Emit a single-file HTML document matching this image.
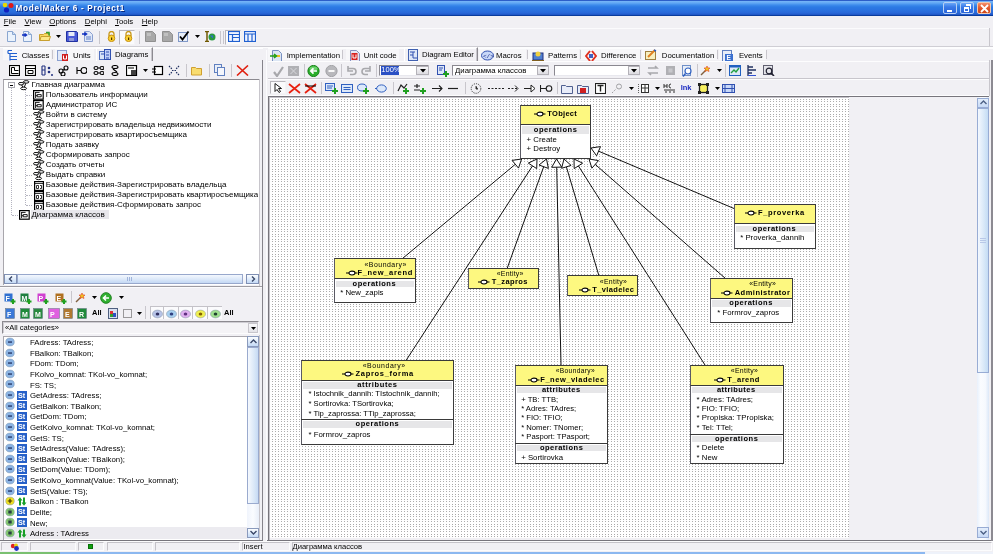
<!DOCTYPE html><html><head><meta charset="utf-8"><style>
html,body{margin:0;padding:0;}
body{will-change:transform;width:993px;height:554px;overflow:hidden;position:relative;background:#f1f0f4;font-family:"Liberation Sans", sans-serif;}
div,span,svg{position:absolute;box-sizing:border-box;}
.t{white-space:nowrap;line-height:10px;}
</style></head><body>
<div style="left:0px;top:0px;width:993px;height:16px;background:linear-gradient(to bottom,#2c5ec8 0px,#2c5ec8 1px,#78b6f8 1px,#62a8f4 3px,#3e8cec 5px,#2c7ae4 7px,#2a72e0 10px,#2868d8 13px,#2058c8 14.5px,#0a3c9c 15px,#0a3c9c 16px);"></div>
<svg style="left:2px;top:2px" width="12" height="11" viewBox="0 0 12 11"><circle cx="3" cy="3" r="2.3" fill="#e8d800"/><circle cx="9" cy="3.5" r="2.5" fill="#e01818"/><circle cx="4.5" cy="8" r="2.6" fill="#1020c0"/></svg>
<span class="t" style="left:15.5px;top:3.6px;line-height:10px;font-size:8.2px;font-weight:bold;color:#fff;letter-spacing:0.69px;text-shadow:1px 1px 0 #0a2a80;">ModelMaker 6 - Project1</span>
<div style="left:943px;top:2px;width:14px;height:12px;border:1px solid #b8d0f4;border-radius:2px;background:linear-gradient(#6aa8f8,#3a7ae8 40%,#2a64d8)"><div style="left:3px;top:7px;width:5px;height:2px;background:#fff"></div></div>
<div style="left:960px;top:2px;width:14px;height:12px;border:1px solid #b8d0f4;border-radius:2px;background:linear-gradient(#6aa8f8,#3a7ae8 40%,#2a64d8)"><div style="left:3px;top:4px;width:5px;height:5px;border:1px solid #fff;border-top-width:2px"></div><div style="left:5px;top:1px;width:5px;height:5px;border-top:2px solid #fff;border-right:1px solid #fff"></div></div>
<div style="left:977px;top:2px;width:14px;height:12px;border:1px solid #f0c8b0;border-radius:2px;background:linear-gradient(#f4906a,#e0582c 50%,#d04818)"><svg style="left:2px;top:1px" width="9" height="9"><path d="M1 1L8 8M8 1L1 8" stroke="#fff" stroke-width="1.8"/></svg></div>
<span class="t" style="left:3.8px;top:16.5px;line-height:10px;font-size:7.8px;font-weight:normal;color:#000;"><u>F</u>ile</span>
<span class="t" style="left:24.5px;top:16.5px;line-height:10px;font-size:7.8px;font-weight:normal;color:#000;"><u>V</u>iew</span>
<span class="t" style="left:49.3px;top:16.5px;line-height:10px;font-size:7.8px;font-weight:normal;color:#000;"><u>O</u>ptions</span>
<span class="t" style="left:84.8px;top:16.5px;line-height:10px;font-size:7.8px;font-weight:normal;color:#000;"><u>D</u>elphi</span>
<span class="t" style="left:115px;top:16.5px;line-height:10px;font-size:7.8px;font-weight:normal;color:#000;"><u>T</u>ools</span>
<span class="t" style="left:141.8px;top:16.5px;line-height:10px;font-size:7.8px;font-weight:normal;color:#000;"><u>H</u>elp</span>
<div style="left:0px;top:28px;width:989px;height:1px;background:#fbfbfd;"></div>
<div style="left:989px;top:28px;width:1px;height:18px;background:#c8c6cc;"></div>
<div style="left:0px;top:46px;width:993px;height:1px;background:#cfced4;"></div>
<div style="left:0px;top:47px;width:993px;height:1px;background:#fdfdfe;"></div>
<svg style="left:6px;top:31px" width="11" height="11" viewBox="0 0 11 11"><path d="M1.5 0.5h5l3 3v7h-8z" fill="#eaf2fc" stroke="#8aa6d0"/><path d="M6.5 0.5v3h3" fill="#c8dcf4" stroke="#8aa6d0"/></svg>
<svg style="left:21.5px;top:31px" width="11" height="11" viewBox="0 0 11 11"><path d="M1.5 0.5h5l3 3v7h-8z" fill="#eaf2fc" stroke="#8aa6d0"/><path d="M6.5 0.5v3h3" fill="#c8dcf4" stroke="#8aa6d0"/><path d="M0 4h4M2.5 2.5l2 1.5-2 1.5" stroke="#1030c0" stroke-width="1.5" fill="none"/></svg>
<svg style="left:38.5px;top:31px" width="12" height="11" viewBox="0 0 12 11"><path d="M0.5 3.5h4l1-1h5v7h-10z" fill="#f8d860" stroke="#c8a030"/><path d="M2 5.5h9.5l-1.5 4h-9z" fill="#fce888" stroke="#c8a030"/><path d="M7 1.5l3 0 0 3" stroke="#30a030" stroke-width="1.5" fill="none"/></svg>
<svg style="left:56px;top:35px" width="5" height="3" viewBox="0 0 5 3"><path d="M0 0h5l-2.5 3z" fill="#000"/></svg>
<svg style="left:65.5px;top:31px" width="12" height="11" viewBox="0 0 12 11"><path d="M0.5 0.5h10l1 1v9h-11z" fill="#4a5ad8" stroke="#2030a0"/><rect x="2.5" y="1" width="6" height="4" fill="#e8ecf8"/><rect x="3" y="7" width="5" height="3" fill="#9098d8"/></svg>
<svg style="left:81.5px;top:31px" width="12" height="11" viewBox="0 0 12 11"><path d="M2.5 0.5h5l3 3v7h-8z" fill="#e0e8f8" stroke="#8aa0d0"/><rect x="4" y="5" width="5" height="4" fill="#a0b4e0"/><path d="M0 3h4M2.5 1.5l2 1.5-2 1.5" stroke="#1030c0" stroke-width="1.5" fill="none"/></svg>
<div style="left:98.5px;top:31px;width:1px;height:13px;background:#c8c6cc;"></div>
<svg style="left:106px;top:31px" width="11" height="11" viewBox="0 0 11 11"><path d="M3 5V3a2.5 2.5 0 0 1 5 0v2" stroke="#c89818" stroke-width="1.3" fill="none"/><circle cx="5.5" cy="7.3" r="3.3" fill="#f8d030" stroke="#c89010"/><rect x="5" y="6.5" width="1.2" height="2.5" fill="#503000"/></svg>
<div style="left:118.5px;top:29.5px;width:16px;height:15.5px;background:#fafafc;border:1px solid #c0bfc6;border-color:#b8b6bc #f4f4f6 #f4f4f6 #b8b6bc;"></div>
<svg style="left:123px;top:31px" width="11" height="11" viewBox="0 0 11 11"><path d="M3 5V3a2.5 2.5 0 0 1 5 0v2" stroke="#c89818" stroke-width="1.3" fill="none"/><circle cx="5.5" cy="7.3" r="3.3" fill="#f8d030" stroke="#c89010"/><rect x="5" y="6.5" width="1.2" height="2.5" fill="#503000"/></svg>
<div style="left:138.5px;top:31px;width:1px;height:13px;background:#c8c6cc;"></div>
<svg style="left:145px;top:31px" width="11" height="11" viewBox="0 0 11 11"><path d="M0.5 0.5h7l3 3v7h-10z" fill="#a8a8a8" stroke="#909090"/><rect x="2" y="2" width="4" height="3" fill="#c0c0c0"/></svg>
<svg style="left:161.5px;top:31px" width="11" height="11" viewBox="0 0 11 11"><path d="M0.5 0.5h7l3 3v7h-10z" fill="#a8a8a8" stroke="#909090"/><rect x="2" y="2" width="4" height="3" fill="#c0c0c0"/></svg>
<svg style="left:178px;top:31px" width="12" height="11" viewBox="0 0 12 11"><rect x="0.5" y="1.5" width="9" height="9" fill="#e8eef8" stroke="#8098c8"/><path d="M2 5.5l2.5 3 6-8" stroke="#000" stroke-width="1.8" fill="none"/></svg>
<svg style="left:194.5px;top:35px" width="5" height="3" viewBox="0 0 5 3"><path d="M0 0h5l-2.5 3z" fill="#000"/></svg>
<svg style="left:204px;top:31px" width="12" height="11" viewBox="0 0 12 11"><path d="M1 0.5h4M1 10.5h4M3 0.5v10" stroke="#705800" stroke-width="1.5"/><circle cx="8" cy="6" r="3.5" fill="#2a9a40"/><path d="M6 4.5l3 0 0 3" fill="#3070d0"/></svg>
<div style="left:220px;top:31px;width:1px;height:13px;background:#c8c6cc;"></div>
<div style="left:223px;top:31px;width:1px;height:13px;background:#c8c6cc;"></div>
<div style="left:224.5px;top:29.5px;width:16px;height:15.5px;background:#fafafc;border:1px solid #c0bfc6;border-color:#b8b6bc #f4f4f6 #f4f4f6 #b8b6bc;"></div>
<svg style="left:227.5px;top:31px" width="12" height="11" viewBox="0 0 12 11"><rect x="0.5" y="0.5" width="11" height="10" fill="#f0f4ff" stroke="#2060d0" stroke-width="1.2"/><path d="M0.5 3.5h11M4.5 3.5v7M4.5 6.5h7" stroke="#2060d0" stroke-width="1.2"/></svg>
<svg style="left:243.5px;top:31px" width="12" height="11" viewBox="0 0 12 11"><rect x="0.5" y="0.5" width="11" height="10" fill="#f0f4ff" stroke="#2060d0" stroke-width="1.2"/><path d="M0.5 3h11M4 3v8M8 3v8" stroke="#2060d0" stroke-width="1.2"/></svg>
<div style="left:3px;top:48px;width:260px;height:1px;background:#fdfdfe;"></div>
<div style="left:51.8px;top:50px;width:1px;height:9px;background:#c8c6cc;"></div>
<div style="left:3px;top:49px;width:48px;height:11px;background:#f7f7f9;"></div>
<div style="left:55px;top:49px;width:39px;height:11px;background:#f7f7f9;"></div>
<svg style="left:6.5px;top:49.5px" width="11" height="11" viewBox="0 0 11 11"><path d="M1 0.5h4M1 3.5h9M3 3.5v7M3 6.5h7M3 9.5h7M1 0.5v3" stroke="#2060d0" stroke-width="1.2" fill="none"/></svg>
<span class="t" style="left:21.7px;top:50.8px;line-height:10px;font-size:7.8px;font-weight:normal;color:#000;">Classes</span>
<svg style="left:57px;top:49.5px" width="12" height="11" viewBox="0 0 12 11"><rect x="0.5" y="0.5" width="9" height="10" fill="#e0e8f8" stroke="#8aa0d0"/><rect x="5" y="4" width="6" height="7" fill="#d02020"/><path d="M6.5 5.5v3.5h3v-3.5" stroke="#fff" fill="none"/></svg>
<span class="t" style="left:73px;top:50.8px;line-height:10px;font-size:7.8px;font-weight:normal;color:#000;">Units</span>
<div style="left:96px;top:47px;width:57px;height:14px;border-left:1px solid #fff;border-top:1px solid #fff;border-right:1px solid #8c8a90;box-shadow:inset -1px 0 0 #c8c6cc;"></div>
<svg style="left:99px;top:48.5px" width="12" height="12" viewBox="0 0 12 12"><rect x="0.5" y="2.5" width="6" height="8" fill="#d8e4f8" stroke="#5070c0"/><rect x="5.5" y="0.5" width="6" height="10" fill="#c0d0f8" stroke="#3050b0"/><path d="M2 5h3M7 3h3M7 6h3M7 9h3" stroke="#3050b0"/></svg>
<span class="t" style="left:115px;top:49.5px;line-height:10px;font-size:7.8px;font-weight:normal;color:#000;">Diagrams</span>
<svg style="left:9px;top:65px" width="11" height="11" viewBox="0 0 11 11"><rect x="0.5" y="0.5" width="10" height="10" fill="#fff" stroke="#000" stroke-width="1.2"/><path d="M2.5 2.5h3v3h4M2.5 2.5v6h7" stroke="#000" fill="none"/></svg>
<svg style="left:25px;top:65px" width="11" height="11" viewBox="0 0 11 11"><rect x="0.5" y="0.5" width="10" height="10" fill="#fff" stroke="#000" stroke-width="1.2"/><path d="M0.5 3.5h10M3 5.5h5v3h-5z" stroke="#000" fill="none"/></svg>
<svg style="left:41px;top:65px" width="12" height="11" viewBox="0 0 12 11"><path d="M1 1v9M4 1v9M1 1h3M1 5h3M1 10h3" stroke="#203080" stroke-width="1.1" fill="none"/><circle cx="8" cy="3" r="1.3" fill="#203080"/><circle cx="8" cy="7" r="1.3" fill="#203080"/><circle cx="11" cy="10" r="1" fill="#203080"/></svg>
<svg style="left:58px;top:65px" width="11" height="11" viewBox="0 0 11 11"><path d="M1 6a2 2 0 1 0 4 0a2 2 0 1 0-4 0M6 3a2 2 0 1 0 4 0a2 2 0 1 0-4 0M3 9a2 2 0 1 0 4 0a2 2 0 1 0-4 0M5 5l2-1" stroke="#000" stroke-width="1.1" fill="none"/></svg>
<svg style="left:75.5px;top:65px" width="11" height="11" viewBox="0 0 11 11"><path d="M1 2v7M5 5.5a3 3 0 1 0 6 0a3 3 0 1 0-6 0M1 5.5h4" stroke="#000" stroke-width="1.1" fill="none"/></svg>
<svg style="left:92.5px;top:65px" width="11" height="11" viewBox="0 0 11 11"><path d="M1 3a2 1.5 0 1 0 4 0a2 1.5 0 1 0-4 0M7 3a2 1.5 0 1 0 4 0a2 1.5 0 1 0-4 0M1 8a2 1.5 0 1 0 4 0a2 1.5 0 1 0-4 0M7 8a2 1.5 0 1 0 4 0a2 1.5 0 1 0-4 0M5 3h2M5 8h2" stroke="#000" stroke-width="1.1" fill="none"/></svg>
<svg style="left:109.5px;top:65px" width="11" height="11" viewBox="0 0 11 11"><path d="M2 2a3 1.5 0 1 0 6 0a3 1.5 0 1 0-6 0M2 9a3 1.5 0 1 0 6 0a3 1.5 0 1 0-6 0M3 4l4 3" stroke="#000" stroke-width="1.1" fill="none"/></svg>
<svg style="left:125.5px;top:65px" width="12" height="11" viewBox="0 0 12 11"><rect x="0.5" y="0.5" width="10" height="10" fill="#fff" stroke="#000" stroke-width="1.2"/><rect x="5" y="5" width="5" height="5" fill="#404040"/><path d="M2 3h6" stroke="#000"/></svg>
<svg style="left:143px;top:69px" width="5" height="3" viewBox="0 0 5 3"><path d="M0 0h5l-2.5 3z" fill="#000"/></svg>
<svg style="left:151.5px;top:65px" width="12" height="11" viewBox="0 0 12 11"><rect x="2.5" y="1.5" width="8" height="8" fill="#fff" stroke="#000" stroke-width="1.2"/><path d="M0 4h4M0 7h4" stroke="#000"/></svg>
<svg style="left:168px;top:65px" width="13" height="11" viewBox="0 0 13 11"><path d="M1 1l3 3M11 1l-3 3M1 10l3-3M11 10l-3-3M4 5.5h5" stroke="#203060" stroke-width="1.2" stroke-dasharray="1.5 1" fill="none"/></svg>
<div style="left:185.8px;top:64px;width:1px;height:13px;background:#c8c6cc;"></div>
<svg style="left:190.8px;top:65px" width="12" height="11" viewBox="0 0 12 11"><path d="M0.5 2.5h4l1 1h5v6.5h-10z" fill="#f8dc70" stroke="#d0a030"/></svg>
<div style="left:208.5px;top:64px;width:1px;height:13px;background:#c8c6cc;"></div>
<svg style="left:213.6px;top:64px" width="12" height="12" viewBox="0 0 12 12"><rect x="0.5" y="0.5" width="7" height="8" fill="#e8eef8" stroke="#6080c0"/><rect x="3.5" y="3.5" width="7" height="8" fill="#f4f6fc" stroke="#6080c0"/></svg>
<div style="left:231px;top:64px;width:1px;height:13px;background:#c8c6cc;"></div>
<svg style="left:236px;top:65px" width="13" height="11" viewBox="0 0 13 11"><path d="M1 0.5l11 10M12 0.5l-11 10" stroke="#e02010" stroke-width="1.6"/></svg>
<div style="left:3px;top:79px;width:256px;height:206px;background:#fff;border-top:1px solid #8c8a90;border-left:1px solid #a8a6ac;"></div>
<div style="left:11px;top:88px;width:1px;height:127px;border-left:1px dotted #b4b4c0;"></div>
<div style="left:25px;top:90px;width:1px;height:115px;border-left:1px dotted #b4b4c0;"></div>
<div style="left:26px;top:95px;width:6px;height:1px;border-top:1px dotted #b4b4c0;"></div>
<div style="left:26px;top:105px;width:6px;height:1px;border-top:1px dotted #b4b4c0;"></div>
<div style="left:26px;top:115px;width:6px;height:1px;border-top:1px dotted #b4b4c0;"></div>
<div style="left:26px;top:125px;width:6px;height:1px;border-top:1px dotted #b4b4c0;"></div>
<div style="left:26px;top:135px;width:6px;height:1px;border-top:1px dotted #b4b4c0;"></div>
<div style="left:26px;top:145px;width:6px;height:1px;border-top:1px dotted #b4b4c0;"></div>
<div style="left:26px;top:155px;width:6px;height:1px;border-top:1px dotted #b4b4c0;"></div>
<div style="left:26px;top:165px;width:6px;height:1px;border-top:1px dotted #b4b4c0;"></div>
<div style="left:26px;top:175px;width:6px;height:1px;border-top:1px dotted #b4b4c0;"></div>
<div style="left:26px;top:185px;width:6px;height:1px;border-top:1px dotted #b4b4c0;"></div>
<div style="left:26px;top:195px;width:6px;height:1px;border-top:1px dotted #b4b4c0;"></div>
<div style="left:26px;top:205px;width:6px;height:1px;border-top:1px dotted #b4b4c0;"></div>
<div style="left:12px;top:215px;width:6px;height:1px;border-top:1px dotted #b4b4c0;"></div>
<div style="left:8px;top:82px;width:7px;height:6px;border:1px solid #a8a8b0;background:#fff"><div style="left:1px;top:1.5px;width:3px;height:1px;background:#000"></div></div>
<svg style="left:18px;top:79.5px" width="12" height="11" viewBox="0 0 12 11"><g fill="none" stroke="#000" stroke-width=".95"><ellipse cx="8.2" cy="1.9" rx="2.8" ry="1.25"/><ellipse cx="3.1" cy="3.7" rx="2.7" ry="1.25"/><ellipse cx="5.6" cy="8.4" rx="2.9" ry="1.3"/><path d="M5.6 3.3L6.2 2.6M3.6 5L5 7.1M7.8 3.2L6.4 7"/></g></svg>
<span class="t" style="left:31.4px;top:80.0px;line-height:10px;font-size:8px;font-weight:normal;color:#000;">Главная диаграмма</span>
<svg style="left:33px;top:90px" width="11" height="10" viewBox="0 0 11 10"><rect x="0.6" y="0.6" width="9.6" height="8.6" fill="#fff" stroke="#000" stroke-width="1.2"/><path d="M2.6 2v6M2.6 2.4h4M4.2 4.6h4v2.2h-4zM2.6 5.7h1.6" stroke="#000" stroke-width=".9" fill="none"/></svg>
<span class="t" style="left:45.8px;top:90.0px;line-height:10px;font-size:8px;font-weight:normal;color:#000;max-width:213px;overflow:hidden;">Пользователь информации</span>
<svg style="left:33px;top:100px" width="11" height="10" viewBox="0 0 11 10"><rect x="0.6" y="0.6" width="9.6" height="8.6" fill="#fff" stroke="#000" stroke-width="1.2"/><path d="M2.6 2v6M2.6 2.4h4M4.2 4.6h4v2.2h-4zM2.6 5.7h1.6" stroke="#000" stroke-width=".9" fill="none"/></svg>
<span class="t" style="left:45.8px;top:100.0px;line-height:10px;font-size:8px;font-weight:normal;color:#000;max-width:213px;overflow:hidden;">Администратор ИС</span>
<svg style="left:33px;top:110px" width="12" height="11" viewBox="0 0 12 11"><g fill="none" stroke="#000" stroke-width=".95"><ellipse cx="8.2" cy="1.9" rx="2.8" ry="1.25"/><ellipse cx="3.1" cy="3.7" rx="2.7" ry="1.25"/><ellipse cx="5.6" cy="8.4" rx="2.9" ry="1.3"/><path d="M5.6 3.3L6.2 2.6M3.6 5L5 7.1M7.8 3.2L6.4 7"/></g></svg>
<span class="t" style="left:45.8px;top:110.0px;line-height:10px;font-size:8px;font-weight:normal;color:#000;max-width:213px;overflow:hidden;">Войти в систему</span>
<svg style="left:33px;top:120px" width="12" height="11" viewBox="0 0 12 11"><g fill="none" stroke="#000" stroke-width=".95"><ellipse cx="8.2" cy="1.9" rx="2.8" ry="1.25"/><ellipse cx="3.1" cy="3.7" rx="2.7" ry="1.25"/><ellipse cx="5.6" cy="8.4" rx="2.9" ry="1.3"/><path d="M5.6 3.3L6.2 2.6M3.6 5L5 7.1M7.8 3.2L6.4 7"/></g></svg>
<span class="t" style="left:45.8px;top:120.0px;line-height:10px;font-size:8px;font-weight:normal;color:#000;max-width:213px;overflow:hidden;">Зарегистрировать владельца недвижимости</span>
<svg style="left:33px;top:130px" width="12" height="11" viewBox="0 0 12 11"><g fill="none" stroke="#000" stroke-width=".95"><ellipse cx="8.2" cy="1.9" rx="2.8" ry="1.25"/><ellipse cx="3.1" cy="3.7" rx="2.7" ry="1.25"/><ellipse cx="5.6" cy="8.4" rx="2.9" ry="1.3"/><path d="M5.6 3.3L6.2 2.6M3.6 5L5 7.1M7.8 3.2L6.4 7"/></g></svg>
<span class="t" style="left:45.8px;top:130.0px;line-height:10px;font-size:8px;font-weight:normal;color:#000;max-width:213px;overflow:hidden;">Зарегистрировать квартиросъемщика</span>
<svg style="left:33px;top:140px" width="12" height="11" viewBox="0 0 12 11"><g fill="none" stroke="#000" stroke-width=".95"><ellipse cx="8.2" cy="1.9" rx="2.8" ry="1.25"/><ellipse cx="3.1" cy="3.7" rx="2.7" ry="1.25"/><ellipse cx="5.6" cy="8.4" rx="2.9" ry="1.3"/><path d="M5.6 3.3L6.2 2.6M3.6 5L5 7.1M7.8 3.2L6.4 7"/></g></svg>
<span class="t" style="left:45.8px;top:140.0px;line-height:10px;font-size:8px;font-weight:normal;color:#000;max-width:213px;overflow:hidden;">Подать заявку</span>
<svg style="left:33px;top:150px" width="12" height="11" viewBox="0 0 12 11"><g fill="none" stroke="#000" stroke-width=".95"><ellipse cx="8.2" cy="1.9" rx="2.8" ry="1.25"/><ellipse cx="3.1" cy="3.7" rx="2.7" ry="1.25"/><ellipse cx="5.6" cy="8.4" rx="2.9" ry="1.3"/><path d="M5.6 3.3L6.2 2.6M3.6 5L5 7.1M7.8 3.2L6.4 7"/></g></svg>
<span class="t" style="left:45.8px;top:150.0px;line-height:10px;font-size:8px;font-weight:normal;color:#000;max-width:213px;overflow:hidden;">Сформировать запрос</span>
<svg style="left:33px;top:160px" width="12" height="11" viewBox="0 0 12 11"><g fill="none" stroke="#000" stroke-width=".95"><ellipse cx="8.2" cy="1.9" rx="2.8" ry="1.25"/><ellipse cx="3.1" cy="3.7" rx="2.7" ry="1.25"/><ellipse cx="5.6" cy="8.4" rx="2.9" ry="1.3"/><path d="M5.6 3.3L6.2 2.6M3.6 5L5 7.1M7.8 3.2L6.4 7"/></g></svg>
<span class="t" style="left:45.8px;top:160.0px;line-height:10px;font-size:8px;font-weight:normal;color:#000;max-width:213px;overflow:hidden;">Создать отчеты</span>
<svg style="left:33px;top:170px" width="12" height="11" viewBox="0 0 12 11"><g fill="none" stroke="#000" stroke-width=".95"><ellipse cx="8.2" cy="1.9" rx="2.8" ry="1.25"/><ellipse cx="3.1" cy="3.7" rx="2.7" ry="1.25"/><ellipse cx="5.6" cy="8.4" rx="2.9" ry="1.3"/><path d="M5.6 3.3L6.2 2.6M3.6 5L5 7.1M7.8 3.2L6.4 7"/></g></svg>
<span class="t" style="left:45.8px;top:170.0px;line-height:10px;font-size:8px;font-weight:normal;color:#000;max-width:213px;overflow:hidden;">Выдать справки</span>
<svg style="left:34px;top:180.5px" width="10" height="10" viewBox="0 0 10 10"><rect x="0.6" y="0.6" width="8.8" height="8.8" fill="#fff" stroke="#000" stroke-width="1.2"/><path d="M0.6 2.5h8.8M2.5 4.5h2v3h-2zM6 4.5h1.5v3H6" stroke="#000" stroke-width=".8" fill="none"/></svg>
<span class="t" style="left:45.8px;top:180.0px;line-height:10px;font-size:8px;font-weight:normal;color:#000;max-width:213px;overflow:hidden;">Базовые действия-Зарегистрировать владельца</span>
<svg style="left:34px;top:190.5px" width="10" height="10" viewBox="0 0 10 10"><rect x="0.6" y="0.6" width="8.8" height="8.8" fill="#fff" stroke="#000" stroke-width="1.2"/><path d="M0.6 2.5h8.8M2.5 4.5h2v3h-2zM6 4.5h1.5v3H6" stroke="#000" stroke-width=".8" fill="none"/></svg>
<span class="t" style="left:45.8px;top:190.0px;line-height:10px;font-size:8px;font-weight:normal;color:#000;max-width:213px;overflow:hidden;">Базовые действия-Зарегистрировать квартиросъемщика</span>
<svg style="left:34px;top:200.5px" width="10" height="10" viewBox="0 0 10 10"><rect x="0.6" y="0.6" width="8.8" height="8.8" fill="#fff" stroke="#000" stroke-width="1.2"/><path d="M0.6 2.5h8.8M2.5 4.5h2v3h-2zM6 4.5h1.5v3H6" stroke="#000" stroke-width=".8" fill="none"/></svg>
<span class="t" style="left:45.8px;top:200.0px;line-height:10px;font-size:8px;font-weight:normal;color:#000;max-width:213px;overflow:hidden;">Базовые действия-Сформировать запрос</span>
<div style="left:31px;top:209.5px;width:78px;height:9.5px;background:#e8e7ec;"></div>
<svg style="left:19px;top:209.5px" width="11" height="10" viewBox="0 0 11 10"><rect x="0.6" y="0.6" width="9.6" height="8.6" fill="#fff" stroke="#000" stroke-width="1.2"/><path d="M2.6 2v6M2.6 2.4h4M4.2 4.6h4v2.2h-4zM2.6 5.7h1.6" stroke="#000" stroke-width=".9" fill="none"/></svg>
<span class="t" style="left:31.4px;top:210.0px;line-height:10px;font-size:8px;font-weight:normal;color:#000;">Диаграмма классов</span>
<div style="left:4px;top:274px;width:255px;height:10px;background:linear-gradient(#fcfcfe,#eef0f6);"></div>
<div style="left:4px;top:274px;width:12.5px;height:10px;background:linear-gradient(#fbfdff,#c4daf6);border:1px solid #8090b4;"></div>
<div style="left:17px;top:274px;width:225.5px;height:10px;background:linear-gradient(#f4f8fe,#d8e6f8 60%,#c4d8f4);border:1px solid #98a8cc;"></div>
<div style="left:259px;top:79px;width:1px;height:207px;background:#c8c6cc;"></div>
<div style="left:259px;top:335px;width:1px;height:205px;background:#c8c6cc;"></div>
<div style="left:246px;top:274px;width:13px;height:10px;background:linear-gradient(#fbfdff,#c4daf6);border:1px solid #8090b4;"></div>
<svg style="left:7.5px;top:276px" width="6" height="6" viewBox="0 0 6 6"><path d="M4 0.5l-2.5 2.5 2.5 2.5" stroke="#3a4868" stroke-width="1.4" fill="none"/></svg>
<svg style="left:249.5px;top:276px" width="6" height="6" viewBox="0 0 6 6"><path d="M2 0.5l2.5 2.5-2.5 2.5" stroke="#3a4868" stroke-width="1.4" fill="none"/></svg>
<svg style="left:127px;top:277px" width="5" height="4" viewBox="0 0 5 4"><path d="M0.5 0v4M2.5 0v4M4.5 0v4" stroke="#a0b4dc"/></svg>
<div style="left:0px;top:286px;width:262px;height:1px;background:#9e9ca2;"></div>
<div style="left:0px;top:287px;width:262px;height:1px;background:#fbfbfd;"></div>
<svg style="left:4px;top:293px" width="13" height="11" viewBox="0 0 13 11"><rect x="0.5" y="0.5" width="8" height="8" fill="#3070d0"/><text x="1.5" y="7.5" font-size="7" font-family="Liberation Sans" font-weight="bold" fill="#fff">F</text><path d="M9 6v5M6.5 8.5h5" stroke="#20a020" stroke-width="2"/></svg>
<svg style="left:20px;top:293px" width="13" height="11" viewBox="0 0 13 11"><rect x="0.5" y="0.5" width="8" height="8" fill="#208040"/><text x="1.5" y="7.5" font-size="7" font-family="Liberation Sans" font-weight="bold" fill="#fff">M</text><path d="M9 6v5M6.5 8.5h5" stroke="#20a020" stroke-width="2"/></svg>
<svg style="left:37.4px;top:293px" width="13" height="11" viewBox="0 0 13 11"><rect x="0.5" y="0.5" width="8" height="8" fill="#d040d0"/><text x="1.5" y="7.5" font-size="7" font-family="Liberation Sans" font-weight="bold" fill="#fff">P</text><path d="M9 6v5M6.5 8.5h5" stroke="#20a020" stroke-width="2"/></svg>
<svg style="left:54.7px;top:293px" width="13" height="11" viewBox="0 0 13 11"><rect x="0.5" y="0.5" width="8" height="8" fill="#b07020"/><text x="1.5" y="7.5" font-size="7" font-family="Liberation Sans" font-weight="bold" fill="#fff">E</text><path d="M9 6v5M6.5 8.5h5" stroke="#20a020" stroke-width="2"/></svg>
<div style="left:70.7px;top:291px;width:1px;height:12px;background:#c8c6cc;"></div>
<svg style="left:74.7px;top:292px" width="11" height="11" viewBox="0 0 11 11"><path d="M1 10l6-6" stroke="#806040" stroke-width="1.5"/><path d="M7 1l1 2 2 0-1.5 1.5 .5 2-2-1-2 1 .5-2L4 3h2z" fill="#f0c020" stroke="#e04020" stroke-width=".6"/></svg>
<svg style="left:92px;top:296px" width="5" height="3" viewBox="0 0 5 3"><path d="M0 0h5l-2.5 3z" fill="#000"/></svg>
<svg style="left:100px;top:291.5px" width="12" height="12" viewBox="0 0 12 12"><circle cx="6" cy="6" r="5.3" fill="#30b030" stroke="#208020"/><path d="M9 6H4M6 3.5L3.5 6 6 8.5" stroke="#fff" stroke-width="1.6" fill="none"/></svg>
<svg style="left:118.8px;top:296px" width="5" height="3" viewBox="0 0 5 3"><path d="M0 0h5l-2.5 3z" fill="#000"/></svg>
<svg style="left:5.3px;top:307.5px" width="10" height="11" viewBox="0 0 10 11"><rect x="0.5" y="0.5" width="9" height="10" fill="#3a78d8" stroke="#607080" stroke-width=".5"/><text x="2" y="8.5" font-size="7" font-family="Liberation Sans" font-weight="bold" fill="#fff">F</text></svg>
<svg style="left:20px;top:307.5px" width="10" height="11" viewBox="0 0 10 11"><rect x="0.5" y="0.5" width="9" height="10" fill="#1f8a3a" stroke="#607080" stroke-width=".5"/><text x="2" y="8.5" font-size="7" font-family="Liberation Sans" font-weight="bold" fill="#fff">M</text></svg>
<svg style="left:33.4px;top:307.5px" width="10" height="11" viewBox="0 0 10 11"><rect x="0.5" y="0.5" width="9" height="10" fill="#2a8a40" stroke="#607080" stroke-width=".5"/><text x="2" y="8.5" font-size="7" font-family="Liberation Sans" font-weight="bold" fill="#fff">M</text></svg>
<svg style="left:48px;top:307.5px" width="12" height="11" viewBox="0 0 12 11"><rect x="0.5" y="0.5" width="11" height="10" fill="#e060e0" stroke="#607080" stroke-width=".5"/><text x="2" y="8.5" font-size="7" font-family="Liberation Sans" font-weight="bold" fill="#fff">P</text></svg>
<svg style="left:62.7px;top:307.5px" width="10" height="11" viewBox="0 0 10 11"><rect x="0.5" y="0.5" width="9" height="10" fill="#b07830" stroke="#607080" stroke-width=".5"/><text x="2" y="8.5" font-size="7" font-family="Liberation Sans" font-weight="bold" fill="#fff">E</text></svg>
<svg style="left:77.4px;top:307.5px" width="10" height="11" viewBox="0 0 10 11"><rect x="0.5" y="0.5" width="9" height="10" fill="#1f8a3a" stroke="#607080" stroke-width=".5"/><text x="2" y="8.5" font-size="7" font-family="Liberation Sans" font-weight="bold" fill="#fff">R</text></svg>
<span class="t" style="left:92px;top:307.5px;font-size:7.5px;font-weight:bold;color:#000;">All</span>
<svg style="left:108px;top:307.5px" width="10" height="11" viewBox="0 0 10 11"><rect x="0.5" y="0.5" width="9" height="10" fill="#d8e0f0" stroke="#506080"/><rect x="2" y="3" width="3" height="3" fill="#e03030"/><rect x="5" y="5" width="3" height="4" fill="#3050c0"/><rect x="2" y="6" width="3" height="3" fill="#30a030"/></svg>
<svg style="left:122.8px;top:307.5px" width="9" height="11" viewBox="0 0 9 11"><rect x="0.5" y="1.5" width="8" height="8" fill="none" stroke="#404040" stroke-dasharray="1 1"/></svg>
<svg style="left:136.5px;top:312px" width="5" height="3" viewBox="0 0 5 3"><path d="M0 0h5l-2.5 3z" fill="#000"/></svg>
<div style="left:145.4px;top:306px;width:1px;height:13px;background:#c8c6cc;"></div>
<div style="left:149.5px;top:306px;width:14.5px;height:13px;background:#fbfbfd;border-left:1px solid #c4c2c8;border-top:1px solid #c4c2c8;"></div>
<svg style="left:152px;top:307.5px" width="11" height="11" viewBox="0 0 11 11"><ellipse cx="5.5" cy="6" rx="5" ry="3.9" fill="#b8c4e8" stroke="#8090a0" stroke-width=".5"/><ellipse cx="5.5" cy="6" rx="1.8" ry="1.5" fill="#303060"/></svg>
<div style="left:163.0px;top:306px;width:14.5px;height:13px;background:#fbfbfd;border-left:1px solid #c4c2c8;border-top:1px solid #c4c2c8;"></div>
<svg style="left:165.5px;top:307.5px" width="11" height="11" viewBox="0 0 11 11"><ellipse cx="5.5" cy="6" rx="5" ry="3.9" fill="#a8d0f0" stroke="#8090a0" stroke-width=".5"/><ellipse cx="5.5" cy="6" rx="1.8" ry="1.5" fill="#304080"/></svg>
<div style="left:177.5px;top:306px;width:14.5px;height:13px;background:#fbfbfd;border-left:1px solid #c4c2c8;border-top:1px solid #c4c2c8;"></div>
<svg style="left:180px;top:307.5px" width="11" height="11" viewBox="0 0 11 11"><ellipse cx="5.5" cy="6" rx="5" ry="3.9" fill="#e0b0f0" stroke="#8090a0" stroke-width=".5"/><ellipse cx="5.5" cy="6" rx="1.8" ry="1.5" fill="#603080"/></svg>
<div style="left:192.3px;top:306px;width:14.5px;height:13px;background:#fbfbfd;border-left:1px solid #c4c2c8;border-top:1px solid #c4c2c8;"></div>
<svg style="left:194.8px;top:307.5px" width="11" height="11" viewBox="0 0 11 11"><ellipse cx="5.5" cy="6" rx="5" ry="3.9" fill="#f0f050" stroke="#8090a0" stroke-width=".5"/><ellipse cx="5.5" cy="6" rx="1.8" ry="1.5" fill="#806000"/></svg>
<div style="left:207.0px;top:306px;width:14.5px;height:13px;background:#fbfbfd;border-left:1px solid #c4c2c8;border-top:1px solid #c4c2c8;"></div>
<svg style="left:209.5px;top:307.5px" width="11" height="11" viewBox="0 0 11 11"><ellipse cx="5.5" cy="6" rx="5" ry="3.9" fill="#a0e090" stroke="#8090a0" stroke-width=".5"/><ellipse cx="5.5" cy="6" rx="1.8" ry="1.5" fill="#204030"/></svg>
<span class="t" style="left:224px;top:307.5px;font-size:7.5px;font-weight:bold;color:#000;">All</span>
<div style="left:2px;top:321px;width:257px;height:13px;background:#f4f3f6;border:1px solid;border-color:#8c8a90 #f8f8fa #fcfcfd #8c8a90;box-shadow:inset 1px 1px 0 #cfcdd3;"></div>
<span class="t" style="left:5px;top:323.0px;line-height:10px;font-size:7.6px;font-weight:normal;color:#000;">«All categories»</span>
<div style="left:247.5px;top:322.5px;width:10.5px;height:10px;background:linear-gradient(#fafafc,#e4e3e8);border:1px solid #c8c6cc;"></div>
<svg style="left:250.5px;top:326.5px" width="5" height="3" viewBox="0 0 5 3"><path d="M0 0h5l-2.5 3z" fill="#000"/></svg>
<div style="left:3px;top:335.5px;width:256px;height:204.5px;background:#fff;border-top:1px solid #a8a6ac;border-left:1px solid #a8a6ac;"></div>
<div style="left:4px;top:527px;width:243px;height:12px;background:#ecebf0;"></div>
<svg style="left:5px;top:336.9px" width="10" height="10" viewBox="0 0 10 10"><ellipse cx="5" cy="5" rx="4.3" ry="3.9" fill="#8cb4e4" stroke="#8098b0" stroke-width=".5"/><rect x="3" y="4.4" width="4" height="1.3" fill="#203060"/></svg>
<span class="t" style="left:29.9px;top:338.0px;line-height:10px;font-size:7.8px;font-weight:normal;color:#000;">FAdress: TAdress;</span>
<svg style="left:5px;top:347.52px" width="10" height="10" viewBox="0 0 10 10"><ellipse cx="5" cy="5" rx="4.3" ry="3.9" fill="#8cb4e4" stroke="#8098b0" stroke-width=".5"/><rect x="3" y="4.4" width="4" height="1.3" fill="#203060"/></svg>
<span class="t" style="left:29.9px;top:348.6px;line-height:10px;font-size:7.8px;font-weight:normal;color:#000;">FBalkon: TBalkon;</span>
<svg style="left:5px;top:358.14px" width="10" height="10" viewBox="0 0 10 10"><ellipse cx="5" cy="5" rx="4.3" ry="3.9" fill="#8cb4e4" stroke="#8098b0" stroke-width=".5"/><rect x="3" y="4.4" width="4" height="1.3" fill="#203060"/></svg>
<span class="t" style="left:29.9px;top:359.2px;line-height:10px;font-size:7.8px;font-weight:normal;color:#000;">FDom: TDom;</span>
<svg style="left:5px;top:368.76px" width="10" height="10" viewBox="0 0 10 10"><ellipse cx="5" cy="5" rx="4.3" ry="3.9" fill="#8cb4e4" stroke="#8098b0" stroke-width=".5"/><rect x="3" y="4.4" width="4" height="1.3" fill="#203060"/></svg>
<span class="t" style="left:29.9px;top:369.9px;line-height:10px;font-size:7.8px;font-weight:normal;color:#000;">FKolvo_komnat: TKol-vo_komnat;</span>
<svg style="left:5px;top:379.38px" width="10" height="10" viewBox="0 0 10 10"><ellipse cx="5" cy="5" rx="4.3" ry="3.9" fill="#8cb4e4" stroke="#8098b0" stroke-width=".5"/><rect x="3" y="4.4" width="4" height="1.3" fill="#203060"/></svg>
<span class="t" style="left:29.9px;top:380.5px;line-height:10px;font-size:7.8px;font-weight:normal;color:#000;">FS: TS;</span>
<svg style="left:5px;top:390.0px" width="10" height="10" viewBox="0 0 10 10"><ellipse cx="5" cy="5" rx="4.3" ry="3.9" fill="#8cb4e4" stroke="#8098b0" stroke-width=".5"/><rect x="3" y="4.4" width="4" height="1.3" fill="#203060"/></svg>
<svg style="left:17.3px;top:390.5px" width="10" height="9" viewBox="0 0 10 9"><rect x="0" y="0" width="10" height="9" fill="#2660c8"/><text x="0.9" y="7.4" font-size="7.2" font-family="Liberation Sans" font-weight="bold" fill="#fff">St</text></svg>
<span class="t" style="left:29.9px;top:391.1px;line-height:10px;font-size:7.8px;font-weight:normal;color:#000;">GetAdress: TAdress;</span>
<svg style="left:5px;top:400.62px" width="10" height="10" viewBox="0 0 10 10"><ellipse cx="5" cy="5" rx="4.3" ry="3.9" fill="#8cb4e4" stroke="#8098b0" stroke-width=".5"/><rect x="3" y="4.4" width="4" height="1.3" fill="#203060"/></svg>
<svg style="left:17.3px;top:401.12px" width="10" height="9" viewBox="0 0 10 9"><rect x="0" y="0" width="10" height="9" fill="#2660c8"/><text x="0.9" y="7.4" font-size="7.2" font-family="Liberation Sans" font-weight="bold" fill="#fff">St</text></svg>
<span class="t" style="left:29.9px;top:401.7px;line-height:10px;font-size:7.8px;font-weight:normal;color:#000;">GetBalkon: TBalkon;</span>
<svg style="left:5px;top:411.23999999999995px" width="10" height="10" viewBox="0 0 10 10"><ellipse cx="5" cy="5" rx="4.3" ry="3.9" fill="#8cb4e4" stroke="#8098b0" stroke-width=".5"/><rect x="3" y="4.4" width="4" height="1.3" fill="#203060"/></svg>
<svg style="left:17.3px;top:411.73999999999995px" width="10" height="9" viewBox="0 0 10 9"><rect x="0" y="0" width="10" height="9" fill="#2660c8"/><text x="0.9" y="7.4" font-size="7.2" font-family="Liberation Sans" font-weight="bold" fill="#fff">St</text></svg>
<span class="t" style="left:29.9px;top:412.3px;line-height:10px;font-size:7.8px;font-weight:normal;color:#000;">GetDom: TDom;</span>
<svg style="left:5px;top:421.85999999999996px" width="10" height="10" viewBox="0 0 10 10"><ellipse cx="5" cy="5" rx="4.3" ry="3.9" fill="#8cb4e4" stroke="#8098b0" stroke-width=".5"/><rect x="3" y="4.4" width="4" height="1.3" fill="#203060"/></svg>
<svg style="left:17.3px;top:422.35999999999996px" width="10" height="9" viewBox="0 0 10 9"><rect x="0" y="0" width="10" height="9" fill="#2660c8"/><text x="0.9" y="7.4" font-size="7.2" font-family="Liberation Sans" font-weight="bold" fill="#fff">St</text></svg>
<span class="t" style="left:29.9px;top:423.0px;line-height:10px;font-size:7.8px;font-weight:normal;color:#000;">GetKolvo_komnat: TKol-vo_komnat;</span>
<svg style="left:5px;top:432.47999999999996px" width="10" height="10" viewBox="0 0 10 10"><ellipse cx="5" cy="5" rx="4.3" ry="3.9" fill="#8cb4e4" stroke="#8098b0" stroke-width=".5"/><rect x="3" y="4.4" width="4" height="1.3" fill="#203060"/></svg>
<svg style="left:17.3px;top:432.97999999999996px" width="10" height="9" viewBox="0 0 10 9"><rect x="0" y="0" width="10" height="9" fill="#2660c8"/><text x="0.9" y="7.4" font-size="7.2" font-family="Liberation Sans" font-weight="bold" fill="#fff">St</text></svg>
<span class="t" style="left:29.9px;top:433.6px;line-height:10px;font-size:7.8px;font-weight:normal;color:#000;">GetS: TS;</span>
<svg style="left:5px;top:443.09999999999997px" width="10" height="10" viewBox="0 0 10 10"><ellipse cx="5" cy="5" rx="4.3" ry="3.9" fill="#8cb4e4" stroke="#8098b0" stroke-width=".5"/><rect x="3" y="4.4" width="4" height="1.3" fill="#203060"/></svg>
<svg style="left:17.3px;top:443.59999999999997px" width="10" height="9" viewBox="0 0 10 9"><rect x="0" y="0" width="10" height="9" fill="#2660c8"/><text x="0.9" y="7.4" font-size="7.2" font-family="Liberation Sans" font-weight="bold" fill="#fff">St</text></svg>
<span class="t" style="left:29.9px;top:444.2px;line-height:10px;font-size:7.8px;font-weight:normal;color:#000;">SetAdress(Value: TAdress);</span>
<svg style="left:5px;top:453.71999999999997px" width="10" height="10" viewBox="0 0 10 10"><ellipse cx="5" cy="5" rx="4.3" ry="3.9" fill="#8cb4e4" stroke="#8098b0" stroke-width=".5"/><rect x="3" y="4.4" width="4" height="1.3" fill="#203060"/></svg>
<svg style="left:17.3px;top:454.21999999999997px" width="10" height="9" viewBox="0 0 10 9"><rect x="0" y="0" width="10" height="9" fill="#2660c8"/><text x="0.9" y="7.4" font-size="7.2" font-family="Liberation Sans" font-weight="bold" fill="#fff">St</text></svg>
<span class="t" style="left:29.9px;top:454.8px;line-height:10px;font-size:7.8px;font-weight:normal;color:#000;">SetBalkon(Value: TBalkon);</span>
<svg style="left:5px;top:464.34px" width="10" height="10" viewBox="0 0 10 10"><ellipse cx="5" cy="5" rx="4.3" ry="3.9" fill="#8cb4e4" stroke="#8098b0" stroke-width=".5"/><rect x="3" y="4.4" width="4" height="1.3" fill="#203060"/></svg>
<svg style="left:17.3px;top:464.84px" width="10" height="9" viewBox="0 0 10 9"><rect x="0" y="0" width="10" height="9" fill="#2660c8"/><text x="0.9" y="7.4" font-size="7.2" font-family="Liberation Sans" font-weight="bold" fill="#fff">St</text></svg>
<span class="t" style="left:29.9px;top:465.4px;line-height:10px;font-size:7.8px;font-weight:normal;color:#000;">SetDom(Value: TDom);</span>
<svg style="left:5px;top:474.96px" width="10" height="10" viewBox="0 0 10 10"><ellipse cx="5" cy="5" rx="4.3" ry="3.9" fill="#8cb4e4" stroke="#8098b0" stroke-width=".5"/><rect x="3" y="4.4" width="4" height="1.3" fill="#203060"/></svg>
<svg style="left:17.3px;top:475.46px" width="10" height="9" viewBox="0 0 10 9"><rect x="0" y="0" width="10" height="9" fill="#2660c8"/><text x="0.9" y="7.4" font-size="7.2" font-family="Liberation Sans" font-weight="bold" fill="#fff">St</text></svg>
<span class="t" style="left:29.9px;top:476.1px;line-height:10px;font-size:7.8px;font-weight:normal;color:#000;">SetKolvo_komnat(Value: TKol-vo_komnat);</span>
<svg style="left:5px;top:485.5799999999999px" width="10" height="10" viewBox="0 0 10 10"><ellipse cx="5" cy="5" rx="4.3" ry="3.9" fill="#8cb4e4" stroke="#8098b0" stroke-width=".5"/><rect x="3" y="4.4" width="4" height="1.3" fill="#203060"/></svg>
<svg style="left:17.3px;top:486.0799999999999px" width="10" height="9" viewBox="0 0 10 9"><rect x="0" y="0" width="10" height="9" fill="#2660c8"/><text x="0.9" y="7.4" font-size="7.2" font-family="Liberation Sans" font-weight="bold" fill="#fff">St</text></svg>
<span class="t" style="left:29.9px;top:486.7px;line-height:10px;font-size:7.8px;font-weight:normal;color:#000;">SetS(Value: TS);</span>
<svg style="left:5px;top:496.19999999999993px" width="10" height="10" viewBox="0 0 10 10"><ellipse cx="5" cy="5" rx="4.3" ry="3.9" fill="#f0e020" stroke="#8098b0" stroke-width=".5"/><path d="M5 2.8v4.4M2.8 5h4.4" stroke="#403000" stroke-width="1.2"/></svg>
<svg style="left:17.3px;top:496.69999999999993px" width="10" height="9" viewBox="0 0 10 9"><path d="M3 8.5V3M7 0.5V6" stroke="#18a028" stroke-width="2"/><path d="M0.5 3.5L3 0.3 5.5 3.5zM4.5 5.5L7 8.7 9.5 5.5z" fill="#18a028"/></svg>
<span class="t" style="left:29.9px;top:497.3px;line-height:10px;font-size:7.8px;font-weight:normal;color:#000;">Balkon : TBalkon</span>
<svg style="left:5px;top:506.81999999999994px" width="10" height="10" viewBox="0 0 10 10"><ellipse cx="5" cy="5" rx="4.3" ry="3.9" fill="#88cc70" stroke="#8098b0" stroke-width=".5"/><path d="M5 2.6v4.8M2.9 3.8l4.2 2.4M7.1 3.8l-4.2 2.4" stroke="#203040" stroke-width="1"/></svg>
<svg style="left:17.3px;top:507.31999999999994px" width="10" height="9" viewBox="0 0 10 9"><rect x="0" y="0" width="10" height="9" fill="#2660c8"/><text x="0.9" y="7.4" font-size="7.2" font-family="Liberation Sans" font-weight="bold" fill="#fff">St</text></svg>
<span class="t" style="left:29.9px;top:507.9px;line-height:10px;font-size:7.8px;font-weight:normal;color:#000;">Delite;</span>
<svg style="left:5px;top:517.4399999999999px" width="10" height="10" viewBox="0 0 10 10"><ellipse cx="5" cy="5" rx="4.3" ry="3.9" fill="#88cc70" stroke="#8098b0" stroke-width=".5"/><path d="M5 2.6v4.8M2.9 3.8l4.2 2.4M7.1 3.8l-4.2 2.4" stroke="#203040" stroke-width="1"/></svg>
<svg style="left:17.3px;top:517.9399999999999px" width="10" height="9" viewBox="0 0 10 9"><rect x="0" y="0" width="10" height="9" fill="#2660c8"/><text x="0.9" y="7.4" font-size="7.2" font-family="Liberation Sans" font-weight="bold" fill="#fff">St</text></svg>
<span class="t" style="left:29.9px;top:518.5px;line-height:10px;font-size:7.8px;font-weight:normal;color:#000;">New;</span>
<svg style="left:5px;top:528.06px" width="10" height="10" viewBox="0 0 10 10"><ellipse cx="5" cy="5" rx="4.3" ry="3.9" fill="#88cc70" stroke="#8098b0" stroke-width=".5"/><path d="M5 2.6v4.8M2.9 3.8l4.2 2.4M7.1 3.8l-4.2 2.4" stroke="#203040" stroke-width="1"/></svg>
<svg style="left:17.3px;top:528.56px" width="10" height="9" viewBox="0 0 10 9"><path d="M3 8.5V3M7 0.5V6" stroke="#18a028" stroke-width="2"/><path d="M0.5 3.5L3 0.3 5.5 3.5zM4.5 5.5L7 8.7 9.5 5.5z" fill="#18a028"/></svg>
<span class="t" style="left:29.9px;top:529.2px;line-height:10px;font-size:7.8px;font-weight:normal;color:#000;">Adress : TAdress</span>
<div style="left:247px;top:336px;width:12px;height:204px;background:linear-gradient(to right,#f0f4fc,#fafcff 50%,#e8eef8);"></div>
<div style="left:247px;top:336px;width:12px;height:10.5px;background:linear-gradient(#fbfdff,#c4daf6);border:1px solid #8a9abc;"></div>
<div style="left:247px;top:346.5px;width:12px;height:157px;background:linear-gradient(to right,#f6f9fe,#dae8f8 60%,#c6daf4);border:1px solid #9aaace;"></div>
<div style="left:247px;top:527.5px;width:12px;height:10.5px;background:linear-gradient(#fbfdff,#c4daf6);border:1px solid #8a9abc;"></div>
<svg style="left:249.5px;top:338.5px" width="7" height="5" viewBox="0 0 7 5"><path d="M0.5 4l3-3 3 3" stroke="#3a4868" stroke-width="1.4" fill="none"/></svg>
<svg style="left:249.5px;top:530px" width="7" height="5" viewBox="0 0 7 5"><path d="M0.5 1l3 3 3-3" stroke="#3a4868" stroke-width="1.4" fill="none"/></svg>
<div style="left:262px;top:60px;width:1px;height:481px;background:#85838a;"></div>
<div style="left:266px;top:49.5px;width:1px;height:491px;background:#fbfbfd;"></div>
<div style="left:268px;top:48px;width:725px;height:1px;background:#fdfdfe;"></div>
<div style="left:268px;top:49px;width:74px;height:11px;background:#f7f7f9;"></div>
<div style="left:346px;top:49px;width:53px;height:11px;background:#f7f7f9;"></div>
<div style="left:479px;top:49px;width:47px;height:11px;background:#f7f7f9;"></div>
<div style="left:528px;top:49px;width:51px;height:11px;background:#f7f7f9;"></div>
<div style="left:581px;top:49px;width:59px;height:11px;background:#f7f7f9;"></div>
<div style="left:642px;top:49px;width:75px;height:11px;background:#f7f7f9;"></div>
<div style="left:719px;top:49px;width:47px;height:11px;background:#f7f7f9;"></div>
<svg style="left:270.2px;top:49.5px" width="12" height="12" viewBox="0 0 12 12"><path d="M2.5 0.5h6l3 3v8h-9z" fill="#dce6f4" stroke="#7890c0"/><rect x="3" y="5" width="7" height="2" fill="#f0c020"/><path d="M0 6h6M4 4l2.5 2L4 8" stroke="#20a020" stroke-width="1.5" fill="none"/></svg>
<span class="t" style="left:286.7px;top:50.8px;line-height:10px;font-size:7.8px;font-weight:normal;color:#000;">Implementation</span>
<div style="left:342.3px;top:50px;width:1px;height:9px;background:#c8c6cc;"></div>
<svg style="left:349.8px;top:49.5px" width="10" height="12" viewBox="0 0 10 12"><path d="M0.5 0.5h6l3 3v8h-9z" fill="#e8e8f4" stroke="#8890c0"/><rect x="1.5" y="3" width="6" height="7" fill="#d82020"/><path d="M3 4.5v3.5h3v-3.5" stroke="#fff" fill="none"/></svg>
<span class="t" style="left:363.7px;top:50.8px;line-height:10px;font-size:7.8px;font-weight:normal;color:#000;">Unit code</span>
<div style="left:404px;top:47px;width:74px;height:14px;border-left:1px solid #fff;border-top:1px solid #fff;border-right:1px solid #8c8a90;box-shadow:inset -1px 0 0 #c8c6cc;"></div>
<svg style="left:408px;top:48.5px" width="10" height="12" viewBox="0 0 10 12"><rect x="0.5" y="0.5" width="9" height="11" fill="#dde6f8" stroke="#4060b0"/><path d="M2 3h5M2 6h3v3h4M5 3v3" stroke="#3050b0" fill="none"/></svg>
<span class="t" style="left:421.9px;top:50.3px;line-height:10px;font-size:7.8px;font-weight:normal;color:#000;">Diagram Editor</span>
<svg style="left:481.3px;top:49.5px" width="13" height="11" viewBox="0 0 13 11"><ellipse cx="6.5" cy="5.5" rx="6" ry="4.5" fill="#c8d8f8" stroke="#3050b0"/><text x="2" y="8" font-size="6" font-family="Liberation Mono" fill="#102080">&lt;/&gt;</text></svg>
<span class="t" style="left:496px;top:50.8px;line-height:10px;font-size:7.8px;font-weight:normal;color:#000;">Macros</span>
<div style="left:526.5px;top:50px;width:1px;height:9px;background:#c8c6cc;"></div>
<svg style="left:531.6px;top:49.5px" width="12" height="11" viewBox="0 0 12 11"><rect x="1" y="3" width="10" height="7" fill="#5080d0" stroke="#203080"/><circle cx="6" cy="4" r="2.5" fill="#f0d040"/><path d="M0 10.5h12" stroke="#806020"/></svg>
<span class="t" style="left:548px;top:50.8px;line-height:10px;font-size:7.8px;font-weight:normal;color:#000;">Patterns</span>
<div style="left:579.6px;top:50px;width:1px;height:9px;background:#c8c6cc;"></div>
<svg style="left:584.7px;top:49.5px" width="12" height="12" viewBox="0 0 12 12"><path d="M5 1L1 6l4 5M7 1l4 5-4 5" stroke="#e03020" stroke-width="2" fill="none"/><rect x="4" y="4" width="4" height="4" fill="#4060c0"/></svg>
<span class="t" style="left:601px;top:50.8px;line-height:10px;font-size:7.8px;font-weight:normal;color:#000;">Difference</span>
<div style="left:640.3px;top:50px;width:1px;height:9px;background:#c8c6cc;"></div>
<svg style="left:645px;top:49px" width="12" height="11" viewBox="0 0 12 11"><rect x="0.5" y="2.5" width="10" height="8" fill="#f8f0c0" stroke="#a08040"/><path d="M3 8l7-7" stroke="#e08020" stroke-width="2"/><path d="M9 1l2 1" stroke="#3060c0" stroke-width="1.5"/></svg>
<span class="t" style="left:661.8px;top:50.8px;line-height:10px;font-size:7.8px;font-weight:normal;color:#000;">Documentation</span>
<div style="left:717.4px;top:50px;width:1px;height:9px;background:#c8c6cc;"></div>
<svg style="left:722.4px;top:49.5px" width="12" height="12" viewBox="0 0 12 12"><rect x="0.5" y="0.5" width="9" height="11" fill="#e8eef8" stroke="#6080c0"/><rect x="3" y="4" width="8" height="7" fill="#3a70d0"/><text x="4.5" y="10" font-size="6.5" font-family="Liberation Sans" font-weight="bold" fill="#fff">E</text></svg>
<span class="t" style="left:738.9px;top:50.8px;line-height:10px;font-size:7.8px;font-weight:normal;color:#000;">Events</span>
<div style="left:766.3px;top:50px;width:1px;height:9px;background:#c8c6cc;"></div>
<div style="left:268px;top:61px;width:721px;height:1px;background:#fdfdfe;"></div>
<div style="left:268px;top:78px;width:721px;height:1px;background:#c8c6cc;"></div>
<div style="left:268px;top:79px;width:721px;height:1px;background:#fdfdfe;"></div>
<div style="left:989px;top:60px;width:1px;height:36px;background:#c8c6cc;"></div>
<svg style="left:272.7px;top:65.5px" width="11" height="11" viewBox="0 0 11 11"><path d="M1 6l3 4 6-9" stroke="#a8a8ac" stroke-width="2.2" fill="none"/></svg>
<svg style="left:288px;top:65.5px" width="11" height="10" viewBox="0 0 11 10"><rect x="0" y="0" width="11" height="10" fill="#b0b0b4"/><path d="M2.5 2l6 6M8.5 2l-6 6" stroke="#d8d8dc"/></svg>
<div style="left:304.3px;top:64px;width:1px;height:13px;background:#c8c6cc;"></div>
<svg style="left:306.9px;top:64.5px" width="13" height="12" viewBox="0 0 13 12"><circle cx="6.5" cy="6" r="5.6" fill="#2aae2a" stroke="#1a801a"/><ellipse cx="6.5" cy="3.5" rx="4" ry="2" fill="#8ae08a" opacity=".7"/><path d="M10 6H4M6.5 3.3L3.8 6l2.7 2.7" stroke="#fff" stroke-width="1.7" fill="none"/></svg>
<svg style="left:324.6px;top:64.5px" width="13" height="12" viewBox="0 0 13 12"><circle cx="6.5" cy="6" r="5.6" fill="#b8b8bc" stroke="#a0a0a4"/><path d="M3.5 6h6" stroke="#fff" stroke-width="1.8"/></svg>
<div style="left:341px;top:64px;width:1px;height:13px;background:#c8c6cc;"></div>
<svg style="left:344.8px;top:65px" width="12" height="11" viewBox="0 0 12 11"><path d="M3 3.5h5a3 3 0 0 1 0 6H5M3 1v5h5" stroke="#a8a8ac" stroke-width="1.6" fill="none"/></svg>
<svg style="left:361.2px;top:65px" width="12" height="11" viewBox="0 0 12 11"><path d="M9 3.5H4a3 3 0 0 0 0 6h3M9 1v5H4" stroke="#a8a8ac" stroke-width="1.6" fill="none"/></svg>
<div style="left:376.4px;top:64px;width:1px;height:13px;background:#c8c6cc;"></div>
<div style="left:378.9px;top:64.5px;width:50.6px;height:11.5px;background:#fff;border:1px solid #8a8890;border-color:#8a8890 #e8e8ee #e8e8ee #8a8890;"></div>
<div style="left:381px;top:66px;width:18px;height:8.5px;background:#2a50c4;"></div>
<span class="t" style="left:381.3px;top:65.2px;font-size:7.5px;font-weight:normal;color:#fff;">100%</span>
<div style="left:416px;top:65.5px;width:12.5px;height:9.5px;background:linear-gradient(#f8f8fa,#dcdbe0);border:1px solid #b4b2b8;"></div>
<svg style="left:419.5px;top:69px" width="6" height="4" viewBox="0 0 6 4"><path d="M0 0h6l-3 3.5z" fill="#000"/></svg>
<svg style="left:437px;top:64.5px" width="12" height="12" viewBox="0 0 12 12"><rect x="0.5" y="0.5" width="7" height="9" fill="#dce6f8" stroke="#3050b0"/><path d="M2 3h4M2 5h3" stroke="#3050b0"/><path d="M9 6v6M6 9h6" stroke="#20a020" stroke-width="2"/></svg>
<div style="left:452.2px;top:64.5px;width:97px;height:11.5px;background:#fff;border:1px solid #8a8890;border-color:#8a8890 #e8e8ee #e8e8ee #8a8890;"></div>
<span class="t" style="left:455px;top:66.0px;line-height:10px;font-size:7.8px;font-weight:normal;color:#000;">Диаграмма классов</span>
<div style="left:537px;top:65.5px;width:12px;height:9.5px;background:linear-gradient(#f8f8fa,#dcdbe0);border:1px solid #b4b2b8;"></div>
<svg style="left:540px;top:69px" width="6" height="4" viewBox="0 0 6 4"><path d="M0 0h6l-3 3.5z" fill="#000"/></svg>
<div style="left:554.3px;top:64.5px;width:86px;height:11.5px;background:#fff;border:1px solid #8a8890;border-color:#8a8890 #e8e8ee #e8e8ee #8a8890;"></div>
<div style="left:628px;top:65.5px;width:12px;height:9.5px;background:linear-gradient(#f8f8fa,#dcdbe0);border:1px solid #b4b2b8;"></div>
<svg style="left:631px;top:69px" width="6" height="4" viewBox="0 0 6 4"><path d="M0 0h6l-3 3.5z" fill="#000"/></svg>
<svg style="left:646.6px;top:65px" width="12" height="11" viewBox="0 0 12 11"><path d="M1 3h9l-2-2M11 8H2l2 2" stroke="#a8a8ac" stroke-width="1.6" fill="none"/></svg>
<svg style="left:665.6px;top:65.5px" width="9" height="9" viewBox="0 0 9 9"><rect x="0" y="0" width="9" height="9" fill="#b0b0b4"/><rect x="2.5" y="2.5" width="4" height="4" fill="#c8c8cc"/></svg>
<svg style="left:682px;top:64.5px" width="11" height="12" viewBox="0 0 11 12"><rect x="0.5" y="0.5" width="8" height="10" fill="#e8eef8" stroke="#7090c8"/><circle cx="6" cy="6" r="3" fill="#fff" stroke="#3060c0" stroke-width="1.2"/><path d="M3.5 8.5l-2.5 3" stroke="#3060c0" stroke-width="1.5"/></svg>
<div style="left:697px;top:64px;width:1px;height:13px;background:#c8c6cc;"></div>
<svg style="left:699.7px;top:65px" width="11" height="11" viewBox="0 0 11 11"><path d="M1 10l6-6" stroke="#806040" stroke-width="1.5"/><path d="M7 1l1 2 2 0-1.5 1.5 .5 2-2-1-2 1 .5-2L4 3h2z" fill="#f0c020" stroke="#e04020" stroke-width=".6"/></svg>
<svg style="left:717.4px;top:69px" width="5" height="3" viewBox="0 0 5 3"><path d="M0 0h5l-2.5 3z" fill="#000"/></svg>
<div style="left:725px;top:64px;width:1px;height:13px;background:#c8c6cc;"></div>
<svg style="left:728.8px;top:65px" width="12" height="11" viewBox="0 0 12 11"><rect x="0.5" y="0.5" width="11" height="10" fill="#dde8f8" stroke="#2060c0"/><path d="M2 8l3-3 2 2 3-4" stroke="#20a040" stroke-width="1.4" fill="none"/><rect x="0.5" y="0.5" width="11" height="2" fill="#2060c0"/></svg>
<svg style="left:746.8px;top:65px" width="10" height="11" viewBox="0 0 10 11"><path d="M1 0v11M1 2h5M1 5h8M1 8h4" stroke="#203060" stroke-width="1.3"/><path d="M1 10.5h8" stroke="#3050d0" stroke-width="1"/></svg>
<svg style="left:763.2px;top:65px" width="12" height="11" viewBox="0 0 12 11"><rect x="0.5" y="0.5" width="9" height="9" fill="#e4e4ea" stroke="#606070"/><circle cx="6" cy="6" r="2.8" fill="none" stroke="#202030" stroke-width="1.2"/><path d="M8 8l3 3" stroke="#202030" stroke-width="1.6"/></svg>
<div style="left:269.5px;top:81px;width:16px;height:13px;background:#fafafc;border:1px solid;border-color:#b8b6bc #f4f4f6 #f4f4f6 #b8b6bc;"></div>
<svg style="left:273.5px;top:83px" width="9" height="10" viewBox="0 0 9 10"><path d="M1 0.5v8l2-2 2 3 1.5-1-2-3h3z" fill="#fff" stroke="#000" stroke-width=".9"/></svg>
<svg style="left:288px;top:83px" width="13" height="11" viewBox="0 0 13 11"><path d="M1 1l11 9M12 1L1 10" stroke="#e82010" stroke-width="1.7"/></svg>
<svg style="left:304.3px;top:83px" width="13" height="11" viewBox="0 0 13 11"><path d="M1 1l11 9M12 1L1 10" stroke="#e82010" stroke-width="1.7"/><path d="M1 3h11" stroke="#000" stroke-width="1"/></svg>
<div style="left:320.8px;top:82px;width:1px;height:12px;background:#c8c6cc;"></div>
<svg style="left:324.6px;top:83px" width="13" height="11" viewBox="0 0 13 11"><rect x="0.5" y="0.5" width="9" height="7" fill="#dce8fa" stroke="#3060c0"/><path d="M2 3h6M2 5h5" stroke="#3060c0"/><path d="M10 5v6M7 8h6" stroke="#20a020" stroke-width="2"/></svg>
<svg style="left:341px;top:83px" width="13" height="11" viewBox="0 0 13 11"><rect x="0.5" y="1.5" width="11" height="8" fill="#dce8fa" stroke="#3060c0"/><path d="M2.5 4.5h7M2.5 6.5h7" stroke="#3060c0"/></svg>
<svg style="left:357.4px;top:83px" width="13" height="11" viewBox="0 0 13 11"><ellipse cx="5" cy="4.5" rx="4.5" ry="3.5" fill="#dce8fa" stroke="#3060c0"/><path d="M9 5v6M6 8h6" stroke="#20a020" stroke-width="2"/></svg>
<svg style="left:375px;top:83px" width="12" height="11" viewBox="0 0 12 11"><ellipse cx="6.5" cy="5.5" rx="4.8" ry="3.6" fill="#dce8fa" stroke="#3060c0"/><path d="M0 5.5h2" stroke="#3060c0"/></svg>
<div style="left:392.8px;top:82px;width:1px;height:12px;background:#c8c6cc;"></div>
<svg style="left:396.6px;top:83px" width="13" height="11" viewBox="0 0 13 11"><path d="M1 8l3-6 3 3 3-4" stroke="#202020" stroke-width="1.2" fill="none"/><path d="M9 5v6M6 8h6" stroke="#20a020" stroke-width="2"/></svg>
<svg style="left:413px;top:83px" width="14" height="11" viewBox="0 0 14 11"><path d="M1 3h6M4 1v4M1 7h6" stroke="#202020" stroke-width="1.2" fill="none"/><path d="M10 5v6M7 8h6" stroke="#20a020" stroke-width="2"/></svg>
<svg style="left:432px;top:84px" width="12" height="9" viewBox="0 0 12 9"><path d="M0 4.5h10M7 1.5l3 3-3 3" stroke="#202020" stroke-width="1.1" fill="none"/></svg>
<svg style="left:448.4px;top:84px" width="11" height="9" viewBox="0 0 11 9"><path d="M0 4.5h10" stroke="#202020" stroke-width="1.2"/></svg>
<div style="left:464.9px;top:82px;width:1px;height:12px;background:#c8c6cc;"></div>
<svg style="left:470px;top:83px" width="12" height="11" viewBox="0 0 12 11"><circle cx="6" cy="5.5" r="4.8" fill="none" stroke="#404040" stroke-dasharray="1.2 1"/><path d="M6 3v3h2" stroke="#404040"/></svg>
<svg style="left:487.6px;top:84px" width="17" height="9" viewBox="0 0 17 9"><path d="M0 4.5h16" stroke="#202020" stroke-width="1.1" stroke-dasharray="2 1.5"/></svg>
<svg style="left:507.6px;top:84px" width="12" height="9" viewBox="0 0 12 9"><path d="M0 4.5h10" stroke="#202020" stroke-dasharray="2 1.5"/><path d="M7 1.5l3 3-3 3" stroke="#202020" fill="none"/></svg>
<svg style="left:524px;top:84px" width="12" height="9" viewBox="0 0 12 9"><path d="M0 4.5h8" stroke="#202020"/><path d="M7 1l4 3.5-4 3.5z" fill="#fff" stroke="#202020"/></svg>
<svg style="left:540.4px;top:84px" width="13" height="9" viewBox="0 0 13 9"><path d="M0.5 1v7M0.5 4.5h6" stroke="#202020" stroke-width="1.1"/><circle cx="9" cy="4.5" r="2.8" fill="none" stroke="#202020" stroke-width="1.1"/></svg>
<div style="left:556.9px;top:82px;width:1px;height:12px;background:#c8c6cc;"></div>
<svg style="left:560.7px;top:83px" width="12" height="11" viewBox="0 0 12 11"><path d="M0.5 2.5h4l1 1h6v7h-11z" fill="#e8ecf8" stroke="#506090"/></svg>
<svg style="left:577px;top:83px" width="12" height="11" viewBox="0 0 12 11"><path d="M0.5 2.5h4l1 1h6v7h-11z" fill="#e8ecf8" stroke="#506090"/><rect x="3" y="5" width="6" height="5" fill="#d02020"/></svg>
<svg style="left:594.8px;top:83px" width="11" height="11" viewBox="0 0 11 11"><rect x="0.5" y="0.5" width="10" height="10" fill="#fff" stroke="#202020" stroke-width="1.1"/><path d="M2.5 2.5h6M5.5 2.5v6" stroke="#202020" stroke-width="1.4"/></svg>
<svg style="left:611.2px;top:83px" width="13" height="11" viewBox="0 0 13 11"><path d="M1 10l4-4" stroke="#a0a0a4" stroke-dasharray="1.5 1"/><circle cx="8" cy="3.5" r="2.5" fill="none" stroke="#a0a0a4"/></svg>
<svg style="left:629px;top:87px" width="5" height="3" viewBox="0 0 5 3"><path d="M0 0h5l-2.5 3z" fill="#000"/></svg>
<svg style="left:637.8px;top:83px" width="12" height="11" viewBox="0 0 12 11"><path d="M0.5 10V1" stroke="#606060" stroke-dasharray="1 1"/><rect x="3.5" y="1.5" width="7" height="8" fill="#fff" stroke="#303030"/><path d="M3.5 5h7M7 1.5v8" stroke="#303030"/></svg>
<svg style="left:654.7px;top:87px" width="5" height="3" viewBox="0 0 5 3"><path d="M0 0h5l-2.5 3z" fill="#000"/></svg>
<svg style="left:663px;top:83px" width="13" height="11" viewBox="0 0 13 11"><path d="M1 1v4M4 1v4M1 3h3M8 1a2 2 0 1 0 0 4M1 7h11M2 9h2M6 9h2M10 9h2" stroke="#303030" fill="none"/></svg>
<span class="t" style="left:680.7px;top:83px;font-size:7.5px;font-weight:bold;color:#1828c0;">lnk</span>
<svg style="left:698.4px;top:83px" width="11" height="11" viewBox="0 0 11 11"><rect x="1.5" y="1.5" width="8" height="8" fill="#f8f060" stroke="#202020" stroke-width="1.3"/><rect x="0" y="0" width="3" height="3" fill="#202020"/><rect x="8" y="8" width="3" height="3" fill="#202020"/><rect x="8" y="0" width="3" height="3" fill="#202020"/><rect x="0" y="8" width="3" height="3" fill="#202020"/></svg>
<svg style="left:714.9px;top:87px" width="5" height="3" viewBox="0 0 5 3"><path d="M0 0h5l-2.5 3z" fill="#000"/></svg>
<svg style="left:722.4px;top:83px" width="13" height="11" viewBox="0 0 13 11"><rect x="0.5" y="1.5" width="12" height="8" fill="#c8d8f8" stroke="#3050b0"/><path d="M3 1.5v8M10 1.5v8M0.5 5.5h12" stroke="#3050b0"/></svg>
<div style="left:268px;top:95px;width:721px;height:1px;background:#fdfdfe;"></div>
<div style="left:268px;top:96px;width:721px;height:1px;background:#77757c;"></div>
<div style="left:268px;top:96px;width:1px;height:444px;background:#77757c;"></div>
<div style="left:269px;top:97px;width:720px;height:1px;background:#c4c2c8;"></div>
<div style="left:269px;top:97px;width:1px;height:443px;background:#c4c2c8;"></div>
<svg style="left:270px;top:98px" width="579" height="440"><defs><pattern id="dots" x="0" y="0" width="3" height="5" patternUnits="userSpaceOnUse"><rect width="3" height="5" fill="#fff"/><rect x="2" y="1" width="1" height="1" fill="#a9a9a9"/><rect x="2" y="3" width="1" height="1" fill="#adadad"/></pattern></defs><rect width="579" height="440" fill="url(#dots)"/></svg>
<div style="left:849px;top:97px;width:128px;height:443px;background:#f1f0f4;"></div>
<div style="left:0px;top:540px;width:263px;height:1px;background:#77757c;"></div>
<div style="left:267px;top:540px;width:725px;height:1px;background:#77757c;"></div>
<div style="left:0px;top:541px;width:993px;height:1px;background:#fcfcfd;"></div>
<div style="left:977px;top:97px;width:12px;height:443px;background:linear-gradient(to right,#e8f0fc,#fafcff 30%,#f6f9fe 70%,#dce8f8);"></div>
<div style="left:977px;top:97.5px;width:12px;height:10px;background:linear-gradient(#e4eefc,#c8daf6);border:1px solid #98acd4;"></div>
<div style="left:977px;top:107.5px;width:12px;height:265.5px;background:linear-gradient(to right,#f4f8fe,#d8e8f8 60%,#c4dcf4);border:1px solid #98acd4;"></div>
<svg style="left:980px;top:238px" width="6" height="5" viewBox="0 0 6 5"><path d="M0 .5h6M0 2.5h6M0 4.5h6" stroke="#b8c8e8"/></svg>
<div style="left:977px;top:527px;width:12px;height:11px;background:linear-gradient(#e4eefc,#c8daf6);border:1px solid #98acd4;"></div>
<svg style="left:980px;top:99.5px" width="7" height="5" viewBox="0 0 7 5"><path d="M0.5 4l3-3 3 3" stroke="#4d6185" stroke-width="1.4" fill="none"/></svg>
<svg style="left:980px;top:530px" width="7" height="5" viewBox="0 0 7 5"><path d="M0.5 1l3 3 3-3" stroke="#4d6185" stroke-width="1.4" fill="none"/></svg>
<div style="left:991px;top:60px;width:2px;height:481px;background:#8c8a92;"></div>
<svg style="left:268px;top:97px" width="581" height="442"><line x1="134.5" y1="161.5" x2="247.3" y2="67.3" stroke="#111" stroke-width="1"/><path d="M253.6 62.0L250.5 71.1L244.1 63.4Z" fill="#fff" stroke="#111" stroke-width="1"/><line x1="138.0" y1="263.5" x2="264.5" y2="68.9" stroke="#111" stroke-width="1"/><path d="M269.0 62.0L268.7 71.6L260.3 66.1Z" fill="#fff" stroke="#111" stroke-width="1"/><line x1="239.3" y1="171.0" x2="275.7" y2="69.7" stroke="#111" stroke-width="1"/><path d="M278.5 62.0L280.4 71.4L271.0 68.0Z" fill="#fff" stroke="#111" stroke-width="1"/><line x1="293.0" y1="268.0" x2="288.7" y2="70.2" stroke="#111" stroke-width="1"/><path d="M288.5 62.0L293.7 70.1L283.7 70.3Z" fill="#fff" stroke="#111" stroke-width="1"/><line x1="331.0" y1="179.0" x2="298.4" y2="69.9" stroke="#111" stroke-width="1"/><path d="M296.0 62.0L303.1 68.4L293.6 71.3Z" fill="#fff" stroke="#111" stroke-width="1"/><line x1="437.0" y1="268.0" x2="310.4" y2="68.9" stroke="#111" stroke-width="1"/><path d="M306.0 62.0L314.6 66.2L306.2 71.6Z" fill="#fff" stroke="#111" stroke-width="1"/><line x1="457.5" y1="181.5" x2="327.2" y2="67.4" stroke="#111" stroke-width="1"/><path d="M321.0 62.0L330.5 63.6L323.9 71.2Z" fill="#fff" stroke="#111" stroke-width="1"/><line x1="466.0" y1="111.5" x2="330.6" y2="54.2" stroke="#111" stroke-width="1"/><path d="M323.0 51.0L332.5 49.6L328.6 58.8Z" fill="#fff" stroke="#111" stroke-width="1"/></svg>
<div style="left:520px;top:105px;width:71px;height:54px;background:#fff;border:1px solid #3a3a3a;border-left-color:#5a5a64;"></div>
<div style="left:520px;top:105px;width:71px;height:20px;background:#fdf880;border:1px solid #3a3a3a;border-left-color:#5a5a64;"></div>
<svg style="left:533.8px;top:111px" width="12" height="6" viewBox="0 0 12 6"><path d="M0 3h11.5" stroke="#000" stroke-width="1"/><ellipse cx="6" cy="3" rx="3" ry="1.9" fill="#fff" stroke="#000" stroke-width="1.05"/></svg>
<span class="t" style="left:547.3px;top:109.0px;line-height:10px;font-size:7.5px;font-weight:bold;color:#000;letter-spacing:0.29px;">TObject</span>
<div style="left:522.3px;top:126px;width:66.70000000000005px;height:8px;background:#e6e6e8;"></div>
<span class="t" style="left:533.8px;top:124.7px;line-height:10px;font-size:7.5px;font-weight:bold;color:#000;letter-spacing:0.52px;">operations</span>
<span class="t" style="left:526.6px;top:134.8px;line-height:10px;font-size:7.8px;font-weight:normal;color:#000;">+ Create</span>
<span class="t" style="left:526.6px;top:143.8px;line-height:10px;font-size:7.8px;font-weight:normal;color:#000;">+ Destroy</span>
<div style="left:734px;top:204px;width:82px;height:45px;background:#fff;border:1px solid #3a3a3a;border-left-color:#5a5a64;"></div>
<div style="left:734px;top:204px;width:82px;height:20px;background:#fdf880;border:1px solid #3a3a3a;border-left-color:#5a5a64;"></div>
<svg style="left:745px;top:210.4px" width="12" height="6" viewBox="0 0 12 6"><path d="M0 3h11.5" stroke="#000" stroke-width="1"/><ellipse cx="6" cy="3" rx="3" ry="1.9" fill="#fff" stroke="#000" stroke-width="1.05"/></svg>
<span class="t" style="left:758px;top:208.4px;line-height:10px;font-size:7.5px;font-weight:bold;color:#000;letter-spacing:0.63px;">F_proverka</span>
<div style="left:735.7px;top:225.9px;width:78.29999999999995px;height:6.5px;background:#e6e6e8;"></div>
<span class="t" style="left:752.6px;top:223.8px;line-height:10px;font-size:7.5px;font-weight:bold;color:#000;letter-spacing:0.52px;">operations</span>
<span class="t" style="left:740.2px;top:233.3px;line-height:10px;font-size:7.8px;font-weight:normal;color:#000;">* Proverka_dannih</span>
<div style="left:334px;top:258px;width:82px;height:45px;background:#fff;border:1px solid #3a3a3a;border-left-color:#5a5a64;"></div>
<div style="left:334px;top:258px;width:82px;height:21px;background:#fdf880;border:1px solid #3a3a3a;border-left-color:#5a5a64;"></div>
<span class="t" style="left:364.5px;top:259.6px;line-height:10px;font-size:6.9px;font-weight:normal;color:#000;letter-spacing:0.51px;">«Boundary»</span>
<svg style="left:345.6px;top:269.8px" width="12" height="6" viewBox="0 0 12 6"><path d="M0 3h11.5" stroke="#000" stroke-width="1"/><ellipse cx="6" cy="3" rx="3" ry="1.9" fill="#fff" stroke="#000" stroke-width="1.05"/></svg>
<span class="t" style="left:357.5px;top:267.8px;line-height:10px;font-size:7.5px;font-weight:bold;color:#000;letter-spacing:0.68px;">F_new_arend</span>
<div style="left:335.5px;top:280.9px;width:78.5px;height:6.5px;background:#e6e6e8;"></div>
<span class="t" style="left:352.6px;top:278.8px;line-height:10px;font-size:7.5px;font-weight:bold;color:#000;letter-spacing:0.52px;">operations</span>
<span class="t" style="left:340.2px;top:288.3px;line-height:10px;font-size:7.8px;font-weight:normal;color:#000;">* New_zapis</span>
<div style="left:468px;top:268px;width:71px;height:21px;background:#fff;border:1px solid #3a3a3a;border-left-color:#5a5a64;"></div>
<div style="left:468px;top:268px;width:71px;height:21px;background:#fdf880;border:1px solid #3a3a3a;border-left-color:#5a5a64;"></div>
<span class="t" style="left:496.8px;top:269.1px;line-height:10px;font-size:6.9px;font-weight:normal;color:#000;letter-spacing:0.24px;">«Entity»</span>
<svg style="left:478.1px;top:279.2px" width="12" height="6" viewBox="0 0 12 6"><path d="M0 3h11.5" stroke="#000" stroke-width="1"/><ellipse cx="6" cy="3" rx="3" ry="1.9" fill="#fff" stroke="#000" stroke-width="1.05"/></svg>
<span class="t" style="left:491.7px;top:277.2px;line-height:10px;font-size:7.5px;font-weight:bold;color:#000;letter-spacing:0.41px;">T_zapros</span>
<div style="left:567px;top:275px;width:71px;height:21px;background:#fff;border:1px solid #3a3a3a;border-left-color:#5a5a64;"></div>
<div style="left:567px;top:275px;width:71px;height:21px;background:#fdf880;border:1px solid #3a3a3a;border-left-color:#5a5a64;"></div>
<span class="t" style="left:599.8px;top:277.1px;line-height:10px;font-size:6.9px;font-weight:normal;color:#000;letter-spacing:0.32px;">«Entity»</span>
<svg style="left:579.2px;top:286.7px" width="12" height="6" viewBox="0 0 12 6"><path d="M0 3h11.5" stroke="#000" stroke-width="1"/><ellipse cx="6" cy="3" rx="3" ry="1.9" fill="#fff" stroke="#000" stroke-width="1.05"/></svg>
<span class="t" style="left:592.3px;top:284.7px;line-height:10px;font-size:7.5px;font-weight:bold;color:#000;letter-spacing:0.37px;">T_vladelec</span>
<div style="left:710px;top:278px;width:83px;height:45px;background:#fff;border:1px solid #3a3a3a;border-left-color:#5a5a64;"></div>
<div style="left:710px;top:278px;width:83px;height:21px;background:#fdf880;border:1px solid #3a3a3a;border-left-color:#5a5a64;"></div>
<span class="t" style="left:749.3px;top:279.1px;line-height:10px;font-size:6.9px;font-weight:normal;color:#000;letter-spacing:0.22px;">«Entity»</span>
<svg style="left:721.1px;top:289.8px" width="12" height="6" viewBox="0 0 12 6"><path d="M0 3h11.5" stroke="#000" stroke-width="1"/><ellipse cx="6" cy="3" rx="3" ry="1.9" fill="#fff" stroke="#000" stroke-width="1.05"/></svg>
<span class="t" style="left:734.7px;top:287.8px;line-height:10px;font-size:7.5px;font-weight:bold;color:#000;letter-spacing:0.50px;">Administrator</span>
<div style="left:711.8px;top:300.3px;width:78.80000000000007px;height:6.5px;background:#e6e6e8;"></div>
<span class="t" style="left:729.3px;top:298.4px;line-height:10px;font-size:7.5px;font-weight:bold;color:#000;letter-spacing:0.52px;">operations</span>
<span class="t" style="left:717.3px;top:308.1px;line-height:10px;font-size:7.8px;font-weight:normal;color:#000;">* Formrov_zapros</span>
<div style="left:301px;top:360px;width:153px;height:85px;background:#fff;border:1px solid #3a3a3a;border-left-color:#5a5a64;"></div>
<div style="left:301px;top:360px;width:153px;height:21px;background:#fdf880;border:1px solid #3a3a3a;border-left-color:#5a5a64;"></div>
<div style="left:301px;top:419px;width:153px;height:1px;background:#3a3a3a;"></div>
<span class="t" style="left:362.7px;top:361.2px;line-height:10px;font-size:6.9px;font-weight:normal;color:#000;letter-spacing:0.58px;">«Boundary»</span>
<svg style="left:341.9px;top:371px" width="12" height="6" viewBox="0 0 12 6"><path d="M0 3h11.5" stroke="#000" stroke-width="1"/><ellipse cx="6" cy="3" rx="3" ry="1.9" fill="#fff" stroke="#000" stroke-width="1.05"/></svg>
<span class="t" style="left:355.5px;top:369.0px;line-height:10px;font-size:7.5px;font-weight:bold;color:#000;letter-spacing:0.70px;">Zapros_forma</span>
<div style="left:303.2px;top:382.1px;width:149.10000000000002px;height:6.699999999999989px;background:#e6e6e8;"></div>
<span class="t" style="left:357.3px;top:380.2px;line-height:10px;font-size:7.5px;font-weight:bold;color:#000;letter-spacing:0.61px;">attributes</span>
<span class="t" style="left:308.5px;top:389.2px;line-height:10px;font-size:7.68px;font-weight:normal;color:#000;">* Istochnik_dannih: TIstochnik_dannih;</span>
<span class="t" style="left:308.5px;top:398.8px;line-height:10px;font-size:7.68px;font-weight:normal;color:#000;">* Sortirovka: TSortirovka;</span>
<span class="t" style="left:308.5px;top:408.5px;line-height:10px;font-size:7.68px;font-weight:normal;color:#000;">* Tip_zaprossa: TTip_zaprossa;</span>
<div style="left:303.2px;top:421.3px;width:149.10000000000002px;height:7.199999999999989px;background:#e6e6e8;"></div>
<span class="t" style="left:355.5px;top:419.4px;line-height:10px;font-size:7.5px;font-weight:bold;color:#000;letter-spacing:0.55px;">operations</span>
<span class="t" style="left:308.5px;top:429.5px;line-height:10px;font-size:7.8px;font-weight:normal;color:#000;">* Formrov_zapros</span>
<div style="left:515px;top:365px;width:93px;height:99px;background:#fff;border:1px solid #3a3a3a;border-left-color:#5a5a64;"></div>
<div style="left:515px;top:365px;width:93px;height:21px;background:#fdf880;border:1px solid #3a3a3a;border-left-color:#5a5a64;"></div>
<div style="left:515px;top:443px;width:93px;height:1px;background:#3a3a3a;"></div>
<span class="t" style="left:555.8px;top:365.6px;line-height:10px;font-size:6.6px;font-weight:normal;color:#000;letter-spacing:0.36px;">«Boundary»</span>
<svg style="left:527.8px;top:376.5px" width="12" height="6" viewBox="0 0 12 6"><path d="M0 3h11.5" stroke="#000" stroke-width="1"/><ellipse cx="6" cy="3" rx="3" ry="1.9" fill="#fff" stroke="#000" stroke-width="1.05"/></svg>
<span class="t" style="left:540.3px;top:374.5px;line-height:10px;font-size:7.5px;font-weight:bold;color:#000;letter-spacing:0.52px;">F_new_vladelec</span>
<div style="left:516.9px;top:386.5px;width:89.30000000000007px;height:6.899999999999977px;background:#e6e6e8;"></div>
<span class="t" style="left:541.9px;top:384.9px;line-height:10px;font-size:7.5px;font-weight:bold;color:#000;letter-spacing:0.45px;">attributes</span>
<span class="t" style="left:521.2px;top:394.6px;line-height:10px;font-size:7.66px;font-weight:normal;color:#000;">+ TB: TTB;</span>
<span class="t" style="left:521.2px;top:404.0px;line-height:10px;font-size:7.66px;font-weight:normal;color:#000;">* Adres: TAdres;</span>
<span class="t" style="left:521.2px;top:413.3px;line-height:10px;font-size:7.66px;font-weight:normal;color:#000;">* FIO: TFIO;</span>
<span class="t" style="left:521.2px;top:422.7px;line-height:10px;font-size:7.66px;font-weight:normal;color:#000;">* Nomer: TNomer;</span>
<span class="t" style="left:521.2px;top:432.0px;line-height:10px;font-size:7.66px;font-weight:normal;color:#000;">* Pasport: TPasport;</span>
<div style="left:516.9px;top:445.2px;width:89.30000000000007px;height:6.300000000000011px;background:#e6e6e8;"></div>
<span class="t" style="left:539.9px;top:443.4px;line-height:10px;font-size:7.5px;font-weight:bold;color:#000;letter-spacing:0.51px;">operations</span>
<span class="t" style="left:521.2px;top:452.7px;line-height:10px;font-size:7.8px;font-weight:normal;color:#000;">+ Sortirovka</span>
<div style="left:690px;top:365px;width:94px;height:99px;background:#fff;border:1px solid #3a3a3a;border-left-color:#5a5a64;"></div>
<div style="left:690px;top:365px;width:94px;height:21px;background:#fdf880;border:1px solid #3a3a3a;border-left-color:#5a5a64;"></div>
<div style="left:690px;top:434px;width:94px;height:1px;background:#3a3a3a;"></div>
<span class="t" style="left:730.8px;top:365.6px;line-height:10px;font-size:6.9px;font-weight:normal;color:#000;letter-spacing:0.29px;">«Entity»</span>
<svg style="left:714.2px;top:376.5px" width="12" height="6" viewBox="0 0 12 6"><path d="M0 3h11.5" stroke="#000" stroke-width="1"/><ellipse cx="6" cy="3" rx="3" ry="1.9" fill="#fff" stroke="#000" stroke-width="1.05"/></svg>
<span class="t" style="left:727.3px;top:374.5px;line-height:10px;font-size:7.5px;font-weight:bold;color:#000;letter-spacing:0.47px;">T_arend</span>
<div style="left:691.9px;top:386.5px;width:89.89999999999998px;height:6.899999999999977px;background:#e6e6e8;"></div>
<span class="t" style="left:716.9px;top:384.9px;line-height:10px;font-size:7.5px;font-weight:bold;color:#000;letter-spacing:0.45px;">attributes</span>
<span class="t" style="left:696.6px;top:394.6px;line-height:10px;font-size:7.85px;font-weight:normal;color:#000;">* Adres: TAdres;</span>
<span class="t" style="left:696.6px;top:404.0px;line-height:10px;font-size:7.85px;font-weight:normal;color:#000;">* FIO: TFIO;</span>
<span class="t" style="left:696.6px;top:413.3px;line-height:10px;font-size:7.85px;font-weight:normal;color:#000;">* Propiska: TPropiska;</span>
<span class="t" style="left:696.6px;top:422.7px;line-height:10px;font-size:7.85px;font-weight:normal;color:#000;">* Tel: TTel;</span>
<div style="left:691.9px;top:435.9px;width:89.89999999999998px;height:6.2000000000000455px;background:#e6e6e8;"></div>
<span class="t" style="left:714.9px;top:434.0px;line-height:10px;font-size:7.5px;font-weight:bold;color:#000;letter-spacing:0.51px;">operations</span>
<span class="t" style="left:696.6px;top:443.4px;line-height:10px;font-size:7.8px;font-weight:normal;color:#000;">* Delete</span>
<span class="t" style="left:696.6px;top:452.7px;line-height:10px;font-size:7.8px;font-weight:normal;color:#000;">* New</span>
<div style="left:1px;top:542px;width:27px;height:9px;border:1px solid;border-color:#c4c2c8 #fcfcfd #fcfcfd #c4c2c8;"></div>
<div style="left:30px;top:542px;width:46px;height:9px;border:1px solid;border-color:#c4c2c8 #fcfcfd #fcfcfd #c4c2c8;"></div>
<div style="left:78px;top:542px;width:26px;height:9px;border:1px solid;border-color:#c4c2c8 #fcfcfd #fcfcfd #c4c2c8;"></div>
<div style="left:107px;top:542px;width:46px;height:9px;border:1px solid;border-color:#c4c2c8 #fcfcfd #fcfcfd #c4c2c8;"></div>
<div style="left:155px;top:542px;width:85px;height:9px;border:1px solid;border-color:#c4c2c8 #fcfcfd #fcfcfd #c4c2c8;"></div>
<div style="left:242px;top:542px;width:48px;height:9px;border:1px solid;border-color:#c4c2c8 #fcfcfd #fcfcfd #c4c2c8;"></div>
<div style="left:292px;top:542px;width:700px;height:9px;border:1px solid;border-color:#c4c2c8 #fcfcfd #fcfcfd #c4c2c8;"></div>
<svg style="left:10px;top:542.5px" width="10" height="8" viewBox="0 0 10 8"><circle cx="3" cy="3" r="2.2" fill="#e02020"/><circle cx="6" cy="2.5" r="2" fill="#e8d010"/><circle cx="6.5" cy="5.5" r="2.4" fill="#2030c0"/></svg>
<div style="left:88px;top:543.5px;width:5px;height:5px;background:#10a010;border:1px solid #087008;"></div>
<span class="t" style="left:243.5px;top:542.0px;line-height:10px;font-size:7.6px;font-weight:normal;color:#000;">Insert</span>
<span class="t" style="left:292.5px;top:542.0px;line-height:10px;font-size:7.6px;font-weight:normal;color:#000;">Диаграмма классов</span>
<div style="left:0px;top:551.5px;width:993px;height:3px;background:#8cb8f0;"></div>
<div style="left:0px;top:551.5px;width:60px;height:3px;background:#7ac070;"></div>
<div style="left:925px;top:551.5px;width:68px;height:3px;background:#eef2fa;"></div>
</body></html>
